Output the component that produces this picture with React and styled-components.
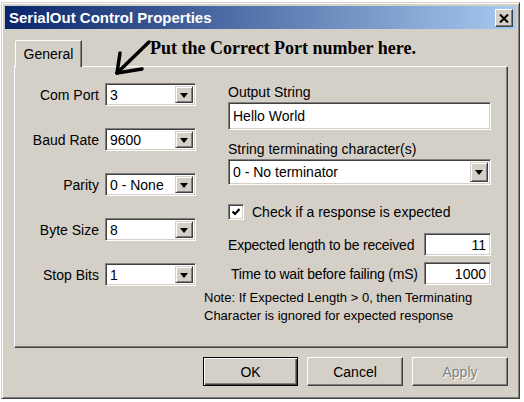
import React from 'react';
import styled, { createGlobalStyle } from 'styled-components';

const face = '#d4d0c8';
const shadow = '#808080';
const dark = '#404040';

const GlobalStyle = createGlobalStyle`
  html, body {
    margin: 0;
    padding: 0;
    background: #ffffff;
  }
  body {
    font-family: "Liberation Sans", Arial, sans-serif;
    font-size: 14px;
    color: #000;
  }
`;

const Page = styled.div`
  position: relative;
  width: 524px;
  height: 402px;
  overflow: hidden;
`;

const Window = styled.div`
  box-sizing: border-box;
  width: 519px;
  height: 397px;
  margin: 2px 0 0 1px;
  padding: 3px;
  background: ${face};
  border: 1px solid;
  border-color: ${face} ${dark} ${dark} ${face};
  box-shadow: inset 1px 1px #fff, inset -1px -1px ${shadow};
  display: flex;
  flex-direction: column;
`;

const TitleBar = styled.div`
  height: 23px;
  display: flex;
  align-items: center;
  justify-content: space-between;
  padding: 0 3px 0 4px;
  background: linear-gradient(to right, #0a246a, #a6caf0);
`;

const Title = styled.span`
  color: #fff;
  font-weight: bold;
  font-size: 15px;
`;

const CloseButton = styled.div`
  box-sizing: border-box;
  width: 18px;
  height: 18px;
  margin-top: 1px;
  background: ${face};
  border: 1px solid;
  border-color: #fff ${dark} ${dark} #fff;
  box-shadow: inset -1px -1px ${shadow};
  display: flex;
  align-items: center;
  justify-content: center;
`;

const Body = styled.div`
  padding: 11px 8px 0 9px;
  display: flex;
  flex-direction: column;
`;

const TabRow = styled.div`
  position: relative;
  z-index: 1;
  height: 26px;
  display: flex;
  align-items: flex-start;
`;

const Tab = styled.div`
  box-sizing: border-box;
  width: 67px;
  height: 27px;
  margin-left: 1px;
  background: ${face};
  border: 1px solid;
  border-bottom: none;
  border-color: #fff ${dark} transparent #fff;
  border-top-left-radius: 2px;
  box-shadow: inset -1px 0 ${shadow};
  display: flex;
  align-items: center;
  justify-content: center;
  padding-bottom: 1px;
`;

const Annotation = styled.span`
  margin: -2px 0 0 68px;
  font-family: "Liberation Serif", "Times New Roman", serif;
  font-weight: bold;
  font-size: 18px;
`;

const Panel = styled.div`
  box-sizing: border-box;
  height: 282px;
  padding-top: 16px;
  border: 1px solid;
  border-color: #fff ${dark} ${dark} #fff;
  box-shadow: inset -1px -1px ${shadow};
`;

const Form = styled.div`
  display: flex;
  align-items: flex-start;
`;

const LeftGrid = styled.div`
  display: grid;
  grid-template-columns: 84px 91px;
  column-gap: 6px;
  row-gap: 22px;
  align-items: center;
`;

const RightLabel = styled.span`
  text-align: right;
`;

const RightColumn = styled.div`
  margin-left: 32px;
  width: 263px;
  display: flex;
  flex-direction: column;
`;

const FieldLabel = styled.div`
  line-height: 16px;
  margin-top: ${(p) => p.$top || 0}px;
`;

const Sunken = styled.div`
  box-sizing: border-box;
  flex-shrink: 0;
  height: ${(p) => p.$h}px;
  width: ${(p) => (p.$w ? `${p.$w}px` : 'auto')};
  margin-top: ${(p) => p.$top || 0}px;
  padding: 2px;
  background: #fff;
  border: 1px solid;
  border-color: ${shadow} #fff #fff ${shadow};
  box-shadow: inset 1px 1px ${dark}, inset -1px -1px ${face};
  display: flex;
  align-items: center;
`;

const Value = styled.span`
  flex: 1;
  padding: 0 2px;
  text-align: ${(p) => (p.$right ? 'right' : 'left')};
  white-space: nowrap;
`;

const DropButton = styled.div`
  box-sizing: border-box;
  width: 18px;
  height: 100%;
  background: ${face};
  border: 1px solid;
  border-color: ${face} ${dark} ${dark} ${face};
  box-shadow: inset 1px 1px #fff, inset -1px -1px ${shadow};
  display: flex;
  align-items: center;
  justify-content: center;
`;

const Triangle = styled.span`
  width: 0;
  height: 0;
  border-left: 4px solid transparent;
  border-right: 4px solid transparent;
  border-top: 5px solid #000;
  margin-top: 1px;
`;

const CheckRow = styled.label`
  margin-top: 19px;
  height: 16px;
  display: flex;
  align-items: center;
  gap: 8px;
`;

const CheckBox = styled.span`
  box-sizing: border-box;
  width: 16px;
  height: 16px;
  background: #fff;
  border: 1px solid;
  border-color: ${shadow} #fff #fff ${shadow};
  box-shadow: inset 1px 1px ${dark}, inset -1px -1px ${face};
  display: flex;
  align-items: center;
  justify-content: center;
`;

const FieldRow = styled.div`
  margin-top: ${(p) => p.$top}px;
  display: flex;
  align-items: center;
  justify-content: space-between;
`;

const RowLabel = styled.span`
  padding-left: ${(p) => p.$indent || 0}px;
  letter-spacing: -0.2px;
  white-space: nowrap;
`;

const Note = styled.div`
  margin: 3px 0 0 189px;
  font-size: 13px;
  line-height: 18px;
  white-space: nowrap;
`;

const ButtonRow = styled.div`
  margin-top: 9px;
  display: flex;
  justify-content: flex-end;
  gap: 9px;
`;

const Button = styled.div`
  box-sizing: border-box;
  width: ${(p) => p.$w}px;
  height: 29px;
  background: ${face};
  border: 1px solid;
  border-color: ${(p) => (p.$default ? '#000' : `#fff ${dark} ${dark} #fff`)};
  box-shadow: ${(p) =>
    p.$default
      ? `inset 1px 1px #fff, inset -1px -1px ${dark}, inset -2px -2px ${shadow}`
      : `inset -1px -1px ${shadow}`};
  display: flex;
  align-items: center;
  justify-content: center;
  color: ${(p) => (p.$disabled ? shadow : '#000')};
  text-shadow: ${(p) => (p.$disabled ? '1px 1px #fff' : 'none')};
`;

const ArrowMark = styled.svg`
  position: absolute;
  left: 105px;
  top: 35px;
  pointer-events: none;
`;

const Combo = ({ value, h = 23, w, top }) => (
  <Sunken $h={h} $w={w} $top={top}>
    <Value>{value}</Value>
    <DropButton>
      <Triangle />
    </DropButton>
  </Sunken>
);

const serialFields = [
  { label: 'Com Port', value: '3' },
  { label: 'Baud Rate', value: '9600' },
  { label: 'Parity', value: '0 - None' },
  { label: 'Byte Size', value: '8' },
  { label: 'Stop Bits', value: '1' },
];

export default function App() {
  return (
    <Page>
      <GlobalStyle />
      <Window>
        <TitleBar>
          <Title>SerialOut Control Properties</Title>
          <CloseButton>
            <svg width="10" height="9" viewBox="0 0 10 9">
              <path d="M1 0.5 L9 8.5 M9 0.5 L1 8.5" stroke="#000" strokeWidth="2" />
            </svg>
          </CloseButton>
        </TitleBar>
        <Body>
          <TabRow>
            <Tab>General</Tab>
            <Annotation>Put the Correct Port number here.</Annotation>
          </TabRow>
          <Panel>
            <Form>
              <LeftGrid>
                {serialFields.map((f) => (
                  <React.Fragment key={f.label}>
                    <RightLabel>{f.label}</RightLabel>
                    <Combo value={f.value} w={91} />
                  </React.Fragment>
                ))}
              </LeftGrid>
              <RightColumn>
                <FieldLabel $top={1}>Output String</FieldLabel>
                <Sunken $h={28} $top={2}>
                  <Value>Hello World</Value>
                </Sunken>
                <FieldLabel $top={11}>String terminating character(s)</FieldLabel>
                <Combo value="0 - No terminator" h={26} top={2} />
                <CheckRow>
                  <CheckBox>
                    <svg width="10" height="10" viewBox="0 0 10 10">
                      <polyline points="1.5,4.5 4,7 8.5,2" fill="none" stroke="#000" strokeWidth="2.2" />
                    </svg>
                  </CheckBox>
                  Check if a response is expected
                </CheckRow>
                <FieldRow $top={13}>
                  <RowLabel>Expected length to be received</RowLabel>
                  <Sunken $h={23} $w={67}>
                    <Value $right>11</Value>
                  </Sunken>
                </FieldRow>
                <FieldRow $top={6}>
                  <RowLabel $indent={3}>Time to wait before failing (mS)</RowLabel>
                  <Sunken $h={23} $w={67}>
                    <Value $right>1000</Value>
                  </Sunken>
                </FieldRow>
              </RightColumn>
            </Form>
            <Note>
              Note: If Expected Length &gt; 0, then Terminating
              <br />
              Character is ignored for expected response
            </Note>
          </Panel>
          <ButtonRow>
            <Button $w={95} $default>OK</Button>
            <Button $w={96}>Cancel</Button>
            <Button $w={96} $disabled>Apply</Button>
          </ButtonRow>
        </Body>
      </Window>
      <ArrowMark width="50" height="45" viewBox="0 0 50 45">
        <g stroke="#000" strokeWidth="3.5" strokeLinecap="round" fill="none">
          <path d="M44 7 L12 38" />
          <path d="M12 38 L15 18" />
          <path d="M12 38 L37 34" />
        </g>
      </ArrowMark>
    </Page>
  );
}
